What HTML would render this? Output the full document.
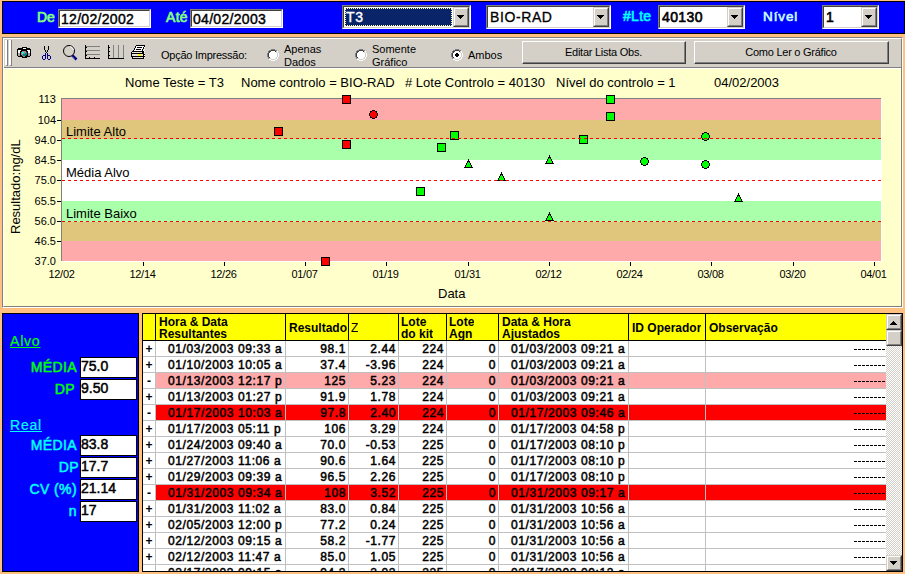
<!DOCTYPE html><html><head><meta charset="utf-8"><style>
*{margin:0;padding:0;box-sizing:border-box}
html,body{width:905px;height:574px;overflow:hidden;background:#FFC080;font-family:"Liberation Sans", sans-serif;}
.a{position:absolute}
.t{position:absolute;white-space:nowrap;line-height:1}
.sunk{position:absolute;border-top:1px solid #808080;border-left:1px solid #808080;border-right:1px solid #fff;border-bottom:1px solid #fff}
.sunk>.in{position:absolute;left:0;top:0;right:0;bottom:0;border-top:1px solid #404040;border-left:1px solid #404040;border-right:1px solid #D4D0C8;border-bottom:1px solid #D4D0C8;background:#fff}
.ddb{position:absolute;background:#D4D0C8;border-top:1px solid #D4D0C8;border-left:1px solid #D4D0C8;border-right:1px solid #404040;border-bottom:1px solid #404040}
.ddb>div{position:absolute;left:0;top:0;right:0;bottom:0;border-top:1px solid #fff;border-left:1px solid #fff;border-right:1px solid #808080;border-bottom:1px solid #808080}
.arr{position:absolute;width:0;height:0;border-left:4px solid transparent;border-right:4px solid transparent;border-top:4px solid #000}
.btn{position:absolute;background:#D4D0C8;border-top:1px solid #fff;border-left:1px solid #fff;border-right:1px solid #404040;border-bottom:1px solid #404040}
.btn>div{position:absolute;left:0;top:0;right:0;bottom:0;border-right:1px solid #808080;border-bottom:1px solid #808080}
</style></head><body><div class="a" style="left:2px;top:1px;width:903px;height:33px;background:#0000FF;border:1px solid #000"></div>
<div class="t" style="left:37px;top:10px;font-size:14px;-webkit-text-stroke:0.7px #80FF80;color:#80FF80">De</div>
<div class="sunk" style="left:58px;top:9px;width:93px;height:19px"><div class="in"></div><div class="t" style="left:2px;top:2px;font-size:14px;font-weight:normal;-webkit-text-stroke:0.45px #000;letter-spacing:0.3px;color:#000">12/02/2002</div></div>
<div class="t" style="left:166px;top:10px;font-size:14px;-webkit-text-stroke:0.7px #80FF80;letter-spacing:0.3px;color:#80FF80">Até</div>
<div class="sunk" style="left:190px;top:9px;width:93px;height:19px"><div class="in"></div><div class="t" style="left:2px;top:2px;font-size:14px;font-weight:normal;-webkit-text-stroke:0.45px #000;letter-spacing:0.3px;color:#000">04/02/2003</div></div>
<div class="sunk" style="left:342px;top:5px;width:129px;height:24px"><div class="in"></div></div>
<div class="a" style="left:345px;top:8px;width:107px;height:18px;background:#0A246A;outline:1px dotted #FFFFAA;outline-offset:-1px"></div>
<div class="t" style="left:346px;top:10px;font-size:14px;letter-spacing:0.8px;font-weight:normal;color:#fff;-webkit-text-stroke:0.4px #fff">T3</div>
<div class="ddb" style="left:453px;top:7px;width:16px;height:20px"><div></div></div><svg class="a" style="left:457px;top:15px" width="7" height="4" shape-rendering="crispEdges"><rect x="0" y="0" width="7" height="1" fill="#000"/><rect x="1" y="1" width="5" height="1" fill="#000"/><rect x="2" y="2" width="3" height="1" fill="#000"/><rect x="3" y="3" width="1" height="1" fill="#000"/></svg>
<div class="sunk" style="left:486px;top:5px;width:125px;height:24px"><div class="in"></div></div>
<div class="t" style="left:490px;top:10px;font-size:14px;letter-spacing:0.6px;font-weight:normal;color:#000;-webkit-text-stroke:0.3px #000">BIO-RAD</div>
<div class="ddb" style="left:593px;top:7px;width:16px;height:20px"><div></div></div><svg class="a" style="left:597px;top:15px" width="7" height="4" shape-rendering="crispEdges"><rect x="0" y="0" width="7" height="1" fill="#000"/><rect x="1" y="1" width="5" height="1" fill="#000"/><rect x="2" y="2" width="3" height="1" fill="#000"/><rect x="3" y="3" width="1" height="1" fill="#000"/></svg>
<div class="t" style="left:623px;top:9px;font-size:14px;-webkit-text-stroke:0.6px #00FFFF;letter-spacing:0.3px;color:#00FFFF">#Lte</div>
<div class="sunk" style="left:658px;top:5px;width:87px;height:24px"><div class="in"></div></div>
<div class="t" style="left:662px;top:10px;font-size:14px;letter-spacing:0.4px;font-weight:normal;color:#000;-webkit-text-stroke:0.6px #000">40130</div>
<div class="ddb" style="left:727px;top:7px;width:16px;height:20px"><div></div></div><svg class="a" style="left:731px;top:15px" width="7" height="4" shape-rendering="crispEdges"><rect x="0" y="0" width="7" height="1" fill="#000"/><rect x="1" y="1" width="5" height="1" fill="#000"/><rect x="2" y="2" width="3" height="1" fill="#000"/><rect x="3" y="3" width="1" height="1" fill="#000"/></svg>
<div class="t" style="left:763px;top:10px;font-size:13.5px;letter-spacing:0.9px;-webkit-text-stroke:0.6px #C8FFFF;color:#C8FFFF">Nível</div>
<div class="sunk" style="left:822px;top:5px;width:57px;height:24px"><div class="in"></div></div>
<div class="t" style="left:826px;top:10px;font-size:14px;letter-spacing:0px;font-weight:normal;color:#000;-webkit-text-stroke:0.6px #000">1</div>
<div class="ddb" style="left:861px;top:7px;width:16px;height:20px"><div></div></div><svg class="a" style="left:865px;top:15px" width="7" height="4" shape-rendering="crispEdges"><rect x="0" y="0" width="7" height="1" fill="#000"/><rect x="1" y="1" width="5" height="1" fill="#000"/><rect x="2" y="2" width="3" height="1" fill="#000"/><rect x="3" y="3" width="1" height="1" fill="#000"/></svg>
<div class="a" style="left:2px;top:37px;width:901px;height:271px;border-top:1px solid #808080;border-left:1px solid #808080;border-right:1px solid #fff;border-bottom:1px solid #fff"></div>
<div class="a" style="left:3px;top:38px;width:899px;height:269px;border-top:1px solid #fff;border-left:1px solid #fff;border-right:1px solid #808080;border-bottom:1px solid #808080;background:#FFFFCC"></div>
<div class="a" style="left:4px;top:39px;width:897px;height:29px;background:#D4D0C8;border-bottom:1px solid #808080"></div>
<div class="a" style="left:4px;top:68px;width:897px;height:1px;background:#fff"></div>
<div class="a" style="left:5px;top:40px;width:3px;height:26px;border-left:2px solid #fff;border-right:1px solid #808080;border-bottom:1px solid #808080"></div>
<div class="a" style="left:9px;top:40px;width:3px;height:26px;border-left:2px solid #fff;border-right:1px solid #808080;border-bottom:1px solid #808080"></div>
<div class="t" style="left:161px;top:50px;font-size:11px;letter-spacing:-0.25px;color:#000">Opção Impressão:</div>
<svg class="a" style="left:267px;top:49px" width="12" height="12" shape-rendering="crispEdges"><rect x="4" y="2" width="4" height="1" fill="#fff"/><rect x="3" y="3" width="6" height="1" fill="#fff"/><rect x="2" y="4" width="8" height="1" fill="#fff"/><rect x="2" y="5" width="8" height="1" fill="#fff"/><rect x="2" y="6" width="8" height="1" fill="#fff"/><rect x="2" y="7" width="8" height="1" fill="#fff"/><rect x="3" y="8" width="6" height="1" fill="#fff"/><rect x="4" y="9" width="4" height="1" fill="#fff"/><rect x="4" y="0" width="1" height="1" fill="#808080"/><rect x="5" y="0" width="1" height="1" fill="#808080"/><rect x="6" y="0" width="1" height="1" fill="#808080"/><rect x="7" y="0" width="1" height="1" fill="#808080"/><rect x="2" y="1" width="1" height="1" fill="#808080"/><rect x="3" y="1" width="1" height="1" fill="#808080"/><rect x="8" y="1" width="1" height="1" fill="#808080"/><rect x="9" y="1" width="1" height="1" fill="#808080"/><rect x="1" y="2" width="1" height="1" fill="#808080"/><rect x="10" y="2" width="1" height="1" fill="#FFFFFF"/><rect x="1" y="3" width="1" height="1" fill="#808080"/><rect x="10" y="3" width="1" height="1" fill="#FFFFFF"/><rect x="0" y="4" width="1" height="1" fill="#808080"/><rect x="11" y="4" width="1" height="1" fill="#FFFFFF"/><rect x="0" y="5" width="1" height="1" fill="#808080"/><rect x="11" y="5" width="1" height="1" fill="#FFFFFF"/><rect x="0" y="6" width="1" height="1" fill="#808080"/><rect x="11" y="6" width="1" height="1" fill="#FFFFFF"/><rect x="0" y="7" width="1" height="1" fill="#808080"/><rect x="11" y="7" width="1" height="1" fill="#FFFFFF"/><rect x="1" y="8" width="1" height="1" fill="#808080"/><rect x="10" y="8" width="1" height="1" fill="#FFFFFF"/><rect x="1" y="9" width="1" height="1" fill="#808080"/><rect x="10" y="9" width="1" height="1" fill="#FFFFFF"/><rect x="2" y="10" width="1" height="1" fill="#FFFFFF"/><rect x="3" y="10" width="1" height="1" fill="#FFFFFF"/><rect x="8" y="10" width="1" height="1" fill="#FFFFFF"/><rect x="9" y="10" width="1" height="1" fill="#FFFFFF"/><rect x="4" y="11" width="1" height="1" fill="#FFFFFF"/><rect x="5" y="11" width="1" height="1" fill="#FFFFFF"/><rect x="6" y="11" width="1" height="1" fill="#FFFFFF"/><rect x="7" y="11" width="1" height="1" fill="#FFFFFF"/><rect x="4" y="1" width="1" height="1" fill="#404040"/><rect x="5" y="1" width="1" height="1" fill="#404040"/><rect x="6" y="1" width="1" height="1" fill="#404040"/><rect x="7" y="1" width="1" height="1" fill="#404040"/><rect x="2" y="2" width="1" height="1" fill="#404040"/><rect x="3" y="2" width="1" height="1" fill="#404040"/><rect x="8" y="2" width="1" height="1" fill="#404040"/><rect x="9" y="2" width="1" height="1" fill="#D4D0C8"/><rect x="2" y="3" width="1" height="1" fill="#404040"/><rect x="9" y="3" width="1" height="1" fill="#D4D0C8"/><rect x="1" y="4" width="1" height="1" fill="#404040"/><rect x="10" y="4" width="1" height="1" fill="#D4D0C8"/><rect x="1" y="5" width="1" height="1" fill="#404040"/><rect x="10" y="5" width="1" height="1" fill="#D4D0C8"/><rect x="1" y="6" width="1" height="1" fill="#404040"/><rect x="10" y="6" width="1" height="1" fill="#D4D0C8"/><rect x="1" y="7" width="1" height="1" fill="#404040"/><rect x="10" y="7" width="1" height="1" fill="#D4D0C8"/><rect x="2" y="8" width="1" height="1" fill="#404040"/><rect x="9" y="8" width="1" height="1" fill="#D4D0C8"/><rect x="2" y="9" width="1" height="1" fill="#D4D0C8"/><rect x="3" y="9" width="1" height="1" fill="#D4D0C8"/><rect x="8" y="9" width="1" height="1" fill="#D4D0C8"/><rect x="9" y="9" width="1" height="1" fill="#D4D0C8"/><rect x="4" y="10" width="1" height="1" fill="#D4D0C8"/><rect x="5" y="10" width="1" height="1" fill="#D4D0C8"/><rect x="6" y="10" width="1" height="1" fill="#D4D0C8"/><rect x="7" y="10" width="1" height="1" fill="#D4D0C8"/></svg>
<div class="t" style="left:284px;top:43px;font-size:11px;line-height:13px;color:#000">Apenas<br>Dados</div>
<svg class="a" style="left:355px;top:49px" width="12" height="12" shape-rendering="crispEdges"><rect x="4" y="2" width="4" height="1" fill="#fff"/><rect x="3" y="3" width="6" height="1" fill="#fff"/><rect x="2" y="4" width="8" height="1" fill="#fff"/><rect x="2" y="5" width="8" height="1" fill="#fff"/><rect x="2" y="6" width="8" height="1" fill="#fff"/><rect x="2" y="7" width="8" height="1" fill="#fff"/><rect x="3" y="8" width="6" height="1" fill="#fff"/><rect x="4" y="9" width="4" height="1" fill="#fff"/><rect x="4" y="0" width="1" height="1" fill="#808080"/><rect x="5" y="0" width="1" height="1" fill="#808080"/><rect x="6" y="0" width="1" height="1" fill="#808080"/><rect x="7" y="0" width="1" height="1" fill="#808080"/><rect x="2" y="1" width="1" height="1" fill="#808080"/><rect x="3" y="1" width="1" height="1" fill="#808080"/><rect x="8" y="1" width="1" height="1" fill="#808080"/><rect x="9" y="1" width="1" height="1" fill="#808080"/><rect x="1" y="2" width="1" height="1" fill="#808080"/><rect x="10" y="2" width="1" height="1" fill="#FFFFFF"/><rect x="1" y="3" width="1" height="1" fill="#808080"/><rect x="10" y="3" width="1" height="1" fill="#FFFFFF"/><rect x="0" y="4" width="1" height="1" fill="#808080"/><rect x="11" y="4" width="1" height="1" fill="#FFFFFF"/><rect x="0" y="5" width="1" height="1" fill="#808080"/><rect x="11" y="5" width="1" height="1" fill="#FFFFFF"/><rect x="0" y="6" width="1" height="1" fill="#808080"/><rect x="11" y="6" width="1" height="1" fill="#FFFFFF"/><rect x="0" y="7" width="1" height="1" fill="#808080"/><rect x="11" y="7" width="1" height="1" fill="#FFFFFF"/><rect x="1" y="8" width="1" height="1" fill="#808080"/><rect x="10" y="8" width="1" height="1" fill="#FFFFFF"/><rect x="1" y="9" width="1" height="1" fill="#808080"/><rect x="10" y="9" width="1" height="1" fill="#FFFFFF"/><rect x="2" y="10" width="1" height="1" fill="#FFFFFF"/><rect x="3" y="10" width="1" height="1" fill="#FFFFFF"/><rect x="8" y="10" width="1" height="1" fill="#FFFFFF"/><rect x="9" y="10" width="1" height="1" fill="#FFFFFF"/><rect x="4" y="11" width="1" height="1" fill="#FFFFFF"/><rect x="5" y="11" width="1" height="1" fill="#FFFFFF"/><rect x="6" y="11" width="1" height="1" fill="#FFFFFF"/><rect x="7" y="11" width="1" height="1" fill="#FFFFFF"/><rect x="4" y="1" width="1" height="1" fill="#404040"/><rect x="5" y="1" width="1" height="1" fill="#404040"/><rect x="6" y="1" width="1" height="1" fill="#404040"/><rect x="7" y="1" width="1" height="1" fill="#404040"/><rect x="2" y="2" width="1" height="1" fill="#404040"/><rect x="3" y="2" width="1" height="1" fill="#404040"/><rect x="8" y="2" width="1" height="1" fill="#404040"/><rect x="9" y="2" width="1" height="1" fill="#D4D0C8"/><rect x="2" y="3" width="1" height="1" fill="#404040"/><rect x="9" y="3" width="1" height="1" fill="#D4D0C8"/><rect x="1" y="4" width="1" height="1" fill="#404040"/><rect x="10" y="4" width="1" height="1" fill="#D4D0C8"/><rect x="1" y="5" width="1" height="1" fill="#404040"/><rect x="10" y="5" width="1" height="1" fill="#D4D0C8"/><rect x="1" y="6" width="1" height="1" fill="#404040"/><rect x="10" y="6" width="1" height="1" fill="#D4D0C8"/><rect x="1" y="7" width="1" height="1" fill="#404040"/><rect x="10" y="7" width="1" height="1" fill="#D4D0C8"/><rect x="2" y="8" width="1" height="1" fill="#404040"/><rect x="9" y="8" width="1" height="1" fill="#D4D0C8"/><rect x="2" y="9" width="1" height="1" fill="#D4D0C8"/><rect x="3" y="9" width="1" height="1" fill="#D4D0C8"/><rect x="8" y="9" width="1" height="1" fill="#D4D0C8"/><rect x="9" y="9" width="1" height="1" fill="#D4D0C8"/><rect x="4" y="10" width="1" height="1" fill="#D4D0C8"/><rect x="5" y="10" width="1" height="1" fill="#D4D0C8"/><rect x="6" y="10" width="1" height="1" fill="#D4D0C8"/><rect x="7" y="10" width="1" height="1" fill="#D4D0C8"/></svg>
<div class="t" style="left:372px;top:43px;font-size:11px;line-height:13px;color:#000">Somente<br>Gráfico</div>
<svg class="a" style="left:451px;top:49px" width="12" height="12" shape-rendering="crispEdges"><rect x="4" y="2" width="4" height="1" fill="#fff"/><rect x="3" y="3" width="6" height="1" fill="#fff"/><rect x="2" y="4" width="8" height="1" fill="#fff"/><rect x="2" y="5" width="8" height="1" fill="#fff"/><rect x="2" y="6" width="8" height="1" fill="#fff"/><rect x="2" y="7" width="8" height="1" fill="#fff"/><rect x="3" y="8" width="6" height="1" fill="#fff"/><rect x="4" y="9" width="4" height="1" fill="#fff"/><rect x="4" y="0" width="1" height="1" fill="#808080"/><rect x="5" y="0" width="1" height="1" fill="#808080"/><rect x="6" y="0" width="1" height="1" fill="#808080"/><rect x="7" y="0" width="1" height="1" fill="#808080"/><rect x="2" y="1" width="1" height="1" fill="#808080"/><rect x="3" y="1" width="1" height="1" fill="#808080"/><rect x="8" y="1" width="1" height="1" fill="#808080"/><rect x="9" y="1" width="1" height="1" fill="#808080"/><rect x="1" y="2" width="1" height="1" fill="#808080"/><rect x="10" y="2" width="1" height="1" fill="#FFFFFF"/><rect x="1" y="3" width="1" height="1" fill="#808080"/><rect x="10" y="3" width="1" height="1" fill="#FFFFFF"/><rect x="0" y="4" width="1" height="1" fill="#808080"/><rect x="11" y="4" width="1" height="1" fill="#FFFFFF"/><rect x="0" y="5" width="1" height="1" fill="#808080"/><rect x="11" y="5" width="1" height="1" fill="#FFFFFF"/><rect x="0" y="6" width="1" height="1" fill="#808080"/><rect x="11" y="6" width="1" height="1" fill="#FFFFFF"/><rect x="0" y="7" width="1" height="1" fill="#808080"/><rect x="11" y="7" width="1" height="1" fill="#FFFFFF"/><rect x="1" y="8" width="1" height="1" fill="#808080"/><rect x="10" y="8" width="1" height="1" fill="#FFFFFF"/><rect x="1" y="9" width="1" height="1" fill="#808080"/><rect x="10" y="9" width="1" height="1" fill="#FFFFFF"/><rect x="2" y="10" width="1" height="1" fill="#FFFFFF"/><rect x="3" y="10" width="1" height="1" fill="#FFFFFF"/><rect x="8" y="10" width="1" height="1" fill="#FFFFFF"/><rect x="9" y="10" width="1" height="1" fill="#FFFFFF"/><rect x="4" y="11" width="1" height="1" fill="#FFFFFF"/><rect x="5" y="11" width="1" height="1" fill="#FFFFFF"/><rect x="6" y="11" width="1" height="1" fill="#FFFFFF"/><rect x="7" y="11" width="1" height="1" fill="#FFFFFF"/><rect x="4" y="1" width="1" height="1" fill="#404040"/><rect x="5" y="1" width="1" height="1" fill="#404040"/><rect x="6" y="1" width="1" height="1" fill="#404040"/><rect x="7" y="1" width="1" height="1" fill="#404040"/><rect x="2" y="2" width="1" height="1" fill="#404040"/><rect x="3" y="2" width="1" height="1" fill="#404040"/><rect x="8" y="2" width="1" height="1" fill="#404040"/><rect x="9" y="2" width="1" height="1" fill="#D4D0C8"/><rect x="2" y="3" width="1" height="1" fill="#404040"/><rect x="9" y="3" width="1" height="1" fill="#D4D0C8"/><rect x="1" y="4" width="1" height="1" fill="#404040"/><rect x="10" y="4" width="1" height="1" fill="#D4D0C8"/><rect x="1" y="5" width="1" height="1" fill="#404040"/><rect x="10" y="5" width="1" height="1" fill="#D4D0C8"/><rect x="1" y="6" width="1" height="1" fill="#404040"/><rect x="10" y="6" width="1" height="1" fill="#D4D0C8"/><rect x="1" y="7" width="1" height="1" fill="#404040"/><rect x="10" y="7" width="1" height="1" fill="#D4D0C8"/><rect x="2" y="8" width="1" height="1" fill="#404040"/><rect x="9" y="8" width="1" height="1" fill="#D4D0C8"/><rect x="2" y="9" width="1" height="1" fill="#D4D0C8"/><rect x="3" y="9" width="1" height="1" fill="#D4D0C8"/><rect x="8" y="9" width="1" height="1" fill="#D4D0C8"/><rect x="9" y="9" width="1" height="1" fill="#D4D0C8"/><rect x="4" y="10" width="1" height="1" fill="#D4D0C8"/><rect x="5" y="10" width="1" height="1" fill="#D4D0C8"/><rect x="6" y="10" width="1" height="1" fill="#D4D0C8"/><rect x="7" y="10" width="1" height="1" fill="#D4D0C8"/><rect x="5" y="4" width="2" height="1" fill="#000"/><rect x="4" y="5" width="4" height="1" fill="#000"/><rect x="4" y="6" width="4" height="1" fill="#000"/><rect x="5" y="7" width="2" height="1" fill="#000"/></svg>
<div class="t" style="left:468px;top:50px;font-size:11px;color:#000">Ambos</div>
<div class="btn" style="left:522px;top:41px;width:164px;height:23px"><div></div><div class="t" style="left:0;width:162px;text-align:center;top:5px;font-size:11px;letter-spacing:-0.25px;color:#000">Editar Lista Obs.</div></div>
<div class="btn" style="left:694px;top:41px;width:195px;height:23px"><div></div><div class="t" style="left:0;width:193px;text-align:center;top:5px;font-size:11px;letter-spacing:-0.25px;color:#000">Como Ler o Gráfico</div></div>
<svg class="a" style="left:0;top:0" width="905" height="574" shape-rendering="crispEdges"><defs><pattern id="dash" x="62" y="0" width="6" height="1" patternUnits="userSpaceOnUse"><rect x="0" y="0" width="3" height="1" fill="#FF0000"/></pattern></defs><rect x="62" y="99" width="819" height="21" fill="#FFAAAA"/><rect x="62" y="120" width="819" height="19" fill="#DFC67C"/><rect x="62" y="139" width="819" height="21" fill="#AAFFAA"/><rect x="62" y="160" width="819" height="41" fill="#FFFFFF"/><rect x="62" y="201" width="819" height="21" fill="#AAFFAA"/><rect x="62" y="222" width="819" height="19" fill="#DFC67C"/><rect x="62" y="241" width="819" height="20" fill="#FFAAAA"/><rect x="61" y="98" width="820" height="1" fill="#808080"/><rect x="61" y="98" width="1" height="163" fill="#808080"/><rect x="881" y="99" width="1" height="163" fill="#FFFFFF"/><rect x="61" y="261" width="821" height="1" fill="#FFFFFF"/><rect x="274" y="127" width="9" height="9" fill="#000"/><rect x="275" y="128" width="7" height="7" fill="#FF0000"/><rect x="321" y="257" width="9" height="9" fill="#000"/><rect x="322" y="258" width="7" height="7" fill="#FF0000"/><rect x="342" y="95" width="9" height="9" fill="#000"/><rect x="343" y="96" width="7" height="7" fill="#FF0000"/><rect x="342" y="140" width="9" height="9" fill="#000"/><rect x="343" y="141" width="7" height="7" fill="#FF0000"/><rect x="372" y="110" width="3" height="1" fill="#000"/><rect x="370" y="111" width="2" height="1" fill="#000"/><rect x="372" y="111" width="3" height="1" fill="#FF0000"/><rect x="375" y="111" width="2" height="1" fill="#000"/><rect x="370" y="112" width="1" height="1" fill="#000"/><rect x="371" y="112" width="5" height="1" fill="#FF0000"/><rect x="376" y="112" width="1" height="1" fill="#000"/><rect x="369" y="113" width="1" height="1" fill="#000"/><rect x="370" y="113" width="7" height="1" fill="#FF0000"/><rect x="377" y="113" width="1" height="1" fill="#000"/><rect x="369" y="114" width="1" height="1" fill="#000"/><rect x="370" y="114" width="7" height="1" fill="#FF0000"/><rect x="377" y="114" width="1" height="1" fill="#000"/><rect x="369" y="115" width="1" height="1" fill="#000"/><rect x="370" y="115" width="7" height="1" fill="#FF0000"/><rect x="377" y="115" width="1" height="1" fill="#000"/><rect x="370" y="116" width="1" height="1" fill="#000"/><rect x="371" y="116" width="5" height="1" fill="#FF0000"/><rect x="376" y="116" width="1" height="1" fill="#000"/><rect x="370" y="117" width="2" height="1" fill="#000"/><rect x="372" y="117" width="3" height="1" fill="#FF0000"/><rect x="375" y="117" width="2" height="1" fill="#000"/><rect x="372" y="118" width="3" height="1" fill="#000"/><rect x="416" y="187" width="9" height="9" fill="#000"/><rect x="417" y="188" width="7" height="7" fill="#00FF00"/><rect x="437" y="143" width="9" height="9" fill="#000"/><rect x="438" y="144" width="7" height="7" fill="#00FF00"/><rect x="450" y="131" width="9" height="9" fill="#000"/><rect x="451" y="132" width="7" height="7" fill="#00FF00"/><path d="M468.5 159 L473 168 L464 168 Z" fill="#000"/><path d="M468.5 161.5 L471.3 167 L465.7 167 Z" fill="#00FF00"/><path d="M501.5 172 L506 181 L497 181 Z" fill="#000"/><path d="M501.5 174.5 L504.3 180 L498.7 180 Z" fill="#00FF00"/><path d="M549.5 155 L554 164 L545 164 Z" fill="#000"/><path d="M549.5 157.5 L552.3 163 L546.7 163 Z" fill="#00FF00"/><path d="M549.5 212 L554 221 L545 221 Z" fill="#000"/><path d="M549.5 214.5 L552.3 220 L546.7 220 Z" fill="#00FF00"/><rect x="579" y="135" width="9" height="9" fill="#000"/><rect x="580" y="136" width="7" height="7" fill="#00FF00"/><rect x="606" y="95" width="9" height="9" fill="#000"/><rect x="607" y="96" width="7" height="7" fill="#00FF00"/><rect x="606" y="112" width="9" height="9" fill="#000"/><rect x="607" y="113" width="7" height="7" fill="#00FF00"/><rect x="643" y="157" width="3" height="1" fill="#000"/><rect x="641" y="158" width="2" height="1" fill="#000"/><rect x="643" y="158" width="3" height="1" fill="#00FF00"/><rect x="646" y="158" width="2" height="1" fill="#000"/><rect x="641" y="159" width="1" height="1" fill="#000"/><rect x="642" y="159" width="5" height="1" fill="#00FF00"/><rect x="647" y="159" width="1" height="1" fill="#000"/><rect x="640" y="160" width="1" height="1" fill="#000"/><rect x="641" y="160" width="7" height="1" fill="#00FF00"/><rect x="648" y="160" width="1" height="1" fill="#000"/><rect x="640" y="161" width="1" height="1" fill="#000"/><rect x="641" y="161" width="7" height="1" fill="#00FF00"/><rect x="648" y="161" width="1" height="1" fill="#000"/><rect x="640" y="162" width="1" height="1" fill="#000"/><rect x="641" y="162" width="7" height="1" fill="#00FF00"/><rect x="648" y="162" width="1" height="1" fill="#000"/><rect x="641" y="163" width="1" height="1" fill="#000"/><rect x="642" y="163" width="5" height="1" fill="#00FF00"/><rect x="647" y="163" width="1" height="1" fill="#000"/><rect x="641" y="164" width="2" height="1" fill="#000"/><rect x="643" y="164" width="3" height="1" fill="#00FF00"/><rect x="646" y="164" width="2" height="1" fill="#000"/><rect x="643" y="165" width="3" height="1" fill="#000"/><rect x="704" y="132" width="3" height="1" fill="#000"/><rect x="702" y="133" width="2" height="1" fill="#000"/><rect x="704" y="133" width="3" height="1" fill="#00FF00"/><rect x="707" y="133" width="2" height="1" fill="#000"/><rect x="702" y="134" width="1" height="1" fill="#000"/><rect x="703" y="134" width="5" height="1" fill="#00FF00"/><rect x="708" y="134" width="1" height="1" fill="#000"/><rect x="701" y="135" width="1" height="1" fill="#000"/><rect x="702" y="135" width="7" height="1" fill="#00FF00"/><rect x="709" y="135" width="1" height="1" fill="#000"/><rect x="701" y="136" width="1" height="1" fill="#000"/><rect x="702" y="136" width="7" height="1" fill="#00FF00"/><rect x="709" y="136" width="1" height="1" fill="#000"/><rect x="701" y="137" width="1" height="1" fill="#000"/><rect x="702" y="137" width="7" height="1" fill="#00FF00"/><rect x="709" y="137" width="1" height="1" fill="#000"/><rect x="702" y="138" width="1" height="1" fill="#000"/><rect x="703" y="138" width="5" height="1" fill="#00FF00"/><rect x="708" y="138" width="1" height="1" fill="#000"/><rect x="702" y="139" width="2" height="1" fill="#000"/><rect x="704" y="139" width="3" height="1" fill="#00FF00"/><rect x="707" y="139" width="2" height="1" fill="#000"/><rect x="704" y="140" width="3" height="1" fill="#000"/><rect x="704" y="160" width="3" height="1" fill="#000"/><rect x="702" y="161" width="2" height="1" fill="#000"/><rect x="704" y="161" width="3" height="1" fill="#00FF00"/><rect x="707" y="161" width="2" height="1" fill="#000"/><rect x="702" y="162" width="1" height="1" fill="#000"/><rect x="703" y="162" width="5" height="1" fill="#00FF00"/><rect x="708" y="162" width="1" height="1" fill="#000"/><rect x="701" y="163" width="1" height="1" fill="#000"/><rect x="702" y="163" width="7" height="1" fill="#00FF00"/><rect x="709" y="163" width="1" height="1" fill="#000"/><rect x="701" y="164" width="1" height="1" fill="#000"/><rect x="702" y="164" width="7" height="1" fill="#00FF00"/><rect x="709" y="164" width="1" height="1" fill="#000"/><rect x="701" y="165" width="1" height="1" fill="#000"/><rect x="702" y="165" width="7" height="1" fill="#00FF00"/><rect x="709" y="165" width="1" height="1" fill="#000"/><rect x="702" y="166" width="1" height="1" fill="#000"/><rect x="703" y="166" width="5" height="1" fill="#00FF00"/><rect x="708" y="166" width="1" height="1" fill="#000"/><rect x="702" y="167" width="2" height="1" fill="#000"/><rect x="704" y="167" width="3" height="1" fill="#00FF00"/><rect x="707" y="167" width="2" height="1" fill="#000"/><rect x="704" y="168" width="3" height="1" fill="#000"/><path d="M738.5 193 L743 202 L734 202 Z" fill="#000"/><path d="M738.5 195.5 L741.3 201 L735.7 201 Z" fill="#00FF00"/><rect x="62" y="138" width="819" height="1" fill="url(#dash)"/><rect x="62" y="180" width="819" height="1" fill="url(#dash)"/><rect x="62" y="221" width="819" height="1" fill="url(#dash)"/><rect x="57" y="120" width="4" height="1" fill="#000"/><rect x="57" y="140" width="4" height="1" fill="#000"/><rect x="57" y="160" width="4" height="1" fill="#000"/><rect x="57" y="180" width="4" height="1" fill="#000"/><rect x="57" y="201" width="4" height="1" fill="#000"/><rect x="57" y="221" width="4" height="1" fill="#000"/><rect x="57" y="241" width="4" height="1" fill="#000"/><rect x="143" y="262" width="1" height="4" fill="#000"/><rect x="224" y="262" width="1" height="4" fill="#000"/><rect x="305" y="262" width="1" height="4" fill="#000"/><rect x="386" y="262" width="1" height="4" fill="#000"/><rect x="468" y="262" width="1" height="4" fill="#000"/><rect x="549" y="262" width="1" height="4" fill="#000"/><rect x="630" y="262" width="1" height="4" fill="#000"/><rect x="711" y="262" width="1" height="4" fill="#000"/><rect x="793" y="262" width="1" height="4" fill="#000"/><rect x="874" y="262" width="1" height="4" fill="#000"/></svg>
<div class="t" style="left:0;width:56px;text-align:right;top:94px;font-size:11px;color:#000">113</div>
<div class="t" style="left:0;width:56px;text-align:right;top:115px;font-size:11px;color:#000">104</div>
<div class="t" style="left:0;width:56px;text-align:right;top:135px;font-size:11px;color:#000">94.0</div>
<div class="t" style="left:0;width:56px;text-align:right;top:155px;font-size:11px;color:#000">84.5</div>
<div class="t" style="left:0;width:56px;text-align:right;top:175px;font-size:11px;color:#000">75.0</div>
<div class="t" style="left:0;width:56px;text-align:right;top:196px;font-size:11px;color:#000">65.5</div>
<div class="t" style="left:0;width:56px;text-align:right;top:216px;font-size:11px;color:#000">56.0</div>
<div class="t" style="left:0;width:56px;text-align:right;top:236px;font-size:11px;color:#000">46.5</div>
<div class="t" style="left:0;width:56px;text-align:right;top:256px;font-size:11px;color:#000">37.0</div>
<div class="t" style="left:41px;width:41px;text-align:center;top:269px;font-size:11px;letter-spacing:-0.3px;color:#000">12/02</div>
<div class="t" style="left:122px;width:41px;text-align:center;top:269px;font-size:11px;letter-spacing:-0.3px;color:#000">12/14</div>
<div class="t" style="left:203px;width:41px;text-align:center;top:269px;font-size:11px;letter-spacing:-0.3px;color:#000">12/26</div>
<div class="t" style="left:284px;width:41px;text-align:center;top:269px;font-size:11px;letter-spacing:-0.3px;color:#000">01/07</div>
<div class="t" style="left:365px;width:41px;text-align:center;top:269px;font-size:11px;letter-spacing:-0.3px;color:#000">01/19</div>
<div class="t" style="left:447px;width:41px;text-align:center;top:269px;font-size:11px;letter-spacing:-0.3px;color:#000">01/31</div>
<div class="t" style="left:528px;width:41px;text-align:center;top:269px;font-size:11px;letter-spacing:-0.3px;color:#000">02/12</div>
<div class="t" style="left:609px;width:41px;text-align:center;top:269px;font-size:11px;letter-spacing:-0.3px;color:#000">02/24</div>
<div class="t" style="left:690px;width:41px;text-align:center;top:269px;font-size:11px;letter-spacing:-0.3px;color:#000">03/08</div>
<div class="t" style="left:772px;width:41px;text-align:center;top:269px;font-size:11px;letter-spacing:-0.3px;color:#000">03/20</div>
<div class="t" style="left:853px;width:41px;text-align:center;top:269px;font-size:11px;letter-spacing:-0.3px;color:#000">04/01</div>
<div class="t" style="left:438px;top:287px;font-size:13px;color:#000">Data</div>
<div class="t" style="left:9px;top:234px;font-size:13px;color:#000;transform-origin:0 0;transform:rotate(-90deg)">Resultado:ng/dL</div>
<div class="t" style="left:125px;top:76px;font-size:13px;color:#000">Nome Teste = T3</div>
<div class="t" style="left:241px;top:76px;font-size:13px;color:#000">Nome controlo = BIO-RAD</div>
<div class="t" style="left:405px;top:76px;font-size:13px;color:#000"># Lote Controlo = 40130</div>
<div class="t" style="left:556px;top:76px;font-size:13px;color:#000">Nível do controlo = 1</div>
<div class="t" style="left:714px;top:76px;font-size:13px;color:#000">04/02/2003</div>
<div class="t" style="left:66px;top:125px;font-size:13px;color:#000">Limite Alto</div>
<div class="t" style="left:66px;top:166px;font-size:13px;color:#000">Média Alvo</div>
<div class="t" style="left:66px;top:207px;font-size:13px;color:#000">Limite Baixo</div>
<div class="a" style="left:2px;top:313px;width:137px;height:259px;background:#0000FF;border:1px solid #000"></div>
<div class="t" style="left:10px;top:334px;font-size:14px;letter-spacing:0.8px;-webkit-text-stroke:0.2px #00FF00;color:#00FF00;text-decoration:underline">Alvo</div>
<div class="t" style="left:10px;top:418px;font-size:14px;letter-spacing:0.8px;-webkit-text-stroke:0.2px #00FFFF;color:#00FFFF;text-decoration:underline">Real</div>
<div class="t" style="left:0;width:77px;text-align:right;top:360px;font-size:14px;-webkit-text-stroke:0.5px #00FF00;letter-spacing:0.4px;color:#00FF00">MÉDIA</div>
<div class="a" style="left:80px;top:357px;width:57px;height:21px;background:#fff;border:1px solid #000"></div>
<div class="t" style="left:81px;top:359px;font-size:14px;-webkit-text-stroke:0.5px #000;color:#000">75.0</div>
<div class="t" style="left:0;width:75px;text-align:right;top:382px;font-size:14px;-webkit-text-stroke:0.5px #00FF00;letter-spacing:0.4px;color:#00FF00">DP</div>
<div class="a" style="left:80px;top:379px;width:57px;height:21px;background:#fff;border:1px solid #000"></div>
<div class="t" style="left:81px;top:381px;font-size:14px;-webkit-text-stroke:0.5px #000;color:#000">9.50</div>
<div class="t" style="left:0;width:77px;text-align:right;top:438px;font-size:14px;-webkit-text-stroke:0.5px #00FFFF;letter-spacing:0.4px;color:#00FFFF">MÉDIA</div>
<div class="a" style="left:80px;top:435px;width:57px;height:21px;background:#fff;border:1px solid #000"></div>
<div class="t" style="left:81px;top:437px;font-size:14px;-webkit-text-stroke:0.5px #000;color:#000">83.8</div>
<div class="t" style="left:0;width:79px;text-align:right;top:460px;font-size:14px;-webkit-text-stroke:0.5px #00FFFF;letter-spacing:0.4px;color:#00FFFF">DP</div>
<div class="a" style="left:80px;top:457px;width:57px;height:21px;background:#fff;border:1px solid #000"></div>
<div class="t" style="left:81px;top:459px;font-size:14px;-webkit-text-stroke:0.5px #000;color:#000">17.7</div>
<div class="t" style="left:0;width:77px;text-align:right;top:482px;font-size:14px;-webkit-text-stroke:0.5px #00FFFF;letter-spacing:0.4px;color:#00FFFF">CV (%)</div>
<div class="a" style="left:80px;top:479px;width:57px;height:21px;background:#fff;border:1px solid #000"></div>
<div class="t" style="left:81px;top:481px;font-size:14px;-webkit-text-stroke:0.5px #000;color:#000">21.14</div>
<div class="t" style="left:0;width:77px;text-align:right;top:504px;font-size:14px;-webkit-text-stroke:0.5px #00FFFF;letter-spacing:0.4px;color:#00FFFF">n</div>
<div class="a" style="left:80px;top:501px;width:57px;height:21px;background:#fff;border:1px solid #000"></div>
<div class="t" style="left:81px;top:503px;font-size:14px;-webkit-text-stroke:0.5px #000;color:#000">17</div>
<div class="a" style="left:142px;top:313px;width:761px;height:259px;background:#fff;border:1px solid #000;overflow:hidden">
<div class="a" style="left:0;top:0;width:743px;height:27px;background:#FFFF00;border-bottom:1px solid #000"></div>
<div class="a" style="left:0;top:42px;width:743px;height:1px;background:#C0C0C0"></div>
<div class="a" style="left:0;top:58px;width:743px;height:1px;background:#C0C0C0"></div>
<div class="a" style="left:13px;top:59px;width:730px;height:15px;background:#FFAAAA"></div>
<div class="a" style="left:0;top:74px;width:743px;height:1px;background:#C0C0C0"></div>
<div class="a" style="left:0;top:90px;width:743px;height:1px;background:#C0C0C0"></div>
<div class="a" style="left:13px;top:91px;width:730px;height:15px;background:#FF0000"></div>
<div class="a" style="left:0;top:106px;width:743px;height:1px;background:#C0C0C0"></div>
<div class="a" style="left:0;top:122px;width:743px;height:1px;background:#C0C0C0"></div>
<div class="a" style="left:0;top:138px;width:743px;height:1px;background:#C0C0C0"></div>
<div class="a" style="left:0;top:154px;width:743px;height:1px;background:#C0C0C0"></div>
<div class="a" style="left:0;top:170px;width:743px;height:1px;background:#C0C0C0"></div>
<div class="a" style="left:13px;top:171px;width:730px;height:15px;background:#FF0000"></div>
<div class="a" style="left:0;top:186px;width:743px;height:1px;background:#C0C0C0"></div>
<div class="a" style="left:0;top:202px;width:743px;height:1px;background:#C0C0C0"></div>
<div class="a" style="left:0;top:218px;width:743px;height:1px;background:#C0C0C0"></div>
<div class="a" style="left:0;top:234px;width:743px;height:1px;background:#C0C0C0"></div>
<div class="a" style="left:0;top:250px;width:743px;height:1px;background:#C0C0C0"></div>
<div class="a" style="left:0;top:266px;width:743px;height:1px;background:#C0C0C0"></div>
<div class="a" style="left:12px;top:0;width:1px;height:27px;background:#000"></div>
<div class="a" style="left:12px;top:27px;width:1px;height:240px;background:#C0C0C0"></div>
<div class="a" style="left:142px;top:0;width:1px;height:27px;background:#000"></div>
<div class="a" style="left:142px;top:27px;width:1px;height:240px;background:#C0C0C0"></div>
<div class="a" style="left:205px;top:0;width:1px;height:27px;background:#000"></div>
<div class="a" style="left:205px;top:27px;width:1px;height:240px;background:#C0C0C0"></div>
<div class="a" style="left:255px;top:0;width:1px;height:27px;background:#000"></div>
<div class="a" style="left:255px;top:27px;width:1px;height:240px;background:#C0C0C0"></div>
<div class="a" style="left:303px;top:0;width:1px;height:27px;background:#000"></div>
<div class="a" style="left:303px;top:27px;width:1px;height:240px;background:#C0C0C0"></div>
<div class="a" style="left:355px;top:0;width:1px;height:27px;background:#000"></div>
<div class="a" style="left:355px;top:27px;width:1px;height:240px;background:#C0C0C0"></div>
<div class="a" style="left:485px;top:0;width:1px;height:27px;background:#000"></div>
<div class="a" style="left:485px;top:27px;width:1px;height:240px;background:#C0C0C0"></div>
<div class="a" style="left:562px;top:0;width:1px;height:27px;background:#000"></div>
<div class="a" style="left:562px;top:27px;width:1px;height:240px;background:#C0C0C0"></div>
<div class="t" style="left:16px;top:2px;font-size:12px;line-height:12px;font-weight:bold;color:#000;height:24px;overflow:hidden">Hora & Data<br>Resultantes</div>
<div class="t" style="left:146px;top:8px;font-size:12px;line-height:12px;font-weight:bold;color:#000;height:18px;overflow:hidden">Resultado</div>
<div class="t" style="left:208px;top:8px;font-size:12px;line-height:12px;font-weight:normal;color:#000;height:18px;overflow:hidden">Z</div>
<div class="t" style="left:258px;top:2px;font-size:12px;line-height:12px;font-weight:bold;color:#000;height:24px;overflow:hidden">Lote<br>do kit</div>
<div class="t" style="left:306px;top:2px;font-size:12px;line-height:12px;font-weight:bold;color:#000;height:24px;overflow:hidden">Lote<br>Agn</div>
<div class="t" style="left:359px;top:2px;font-size:12px;line-height:12px;font-weight:bold;color:#000;height:24px;overflow:hidden">Data & Hora<br>Ajustados</div>
<div class="t" style="left:489px;top:8px;font-size:12px;line-height:12px;font-weight:bold;color:#000;height:18px;overflow:hidden">ID Operador</div>
<div class="t" style="left:566px;top:8px;font-size:12px;line-height:12px;font-weight:bold;color:#000;height:18px;overflow:hidden">Observação</div>
<div class="t" style="left:1px;width:10px;text-align:center;top:29px;font-size:12px;font-weight:bold">+</div>
<div class="t" style="left:25px;top:29px;font-size:12px;-webkit-text-stroke:0.5px #000;letter-spacing:0.6px">01/03/2003 09:33 a</div>
<div class="t" style="left:142px;width:61px;text-align:right;top:29px;font-size:12px;-webkit-text-stroke:0.5px #000;letter-spacing:0.6px">98.1</div>
<div class="t" style="left:205px;width:48px;text-align:right;top:29px;font-size:12px;-webkit-text-stroke:0.5px #000;letter-spacing:0.6px">2.44</div>
<div class="t" style="left:255px;width:46px;text-align:right;top:29px;font-size:12px;-webkit-text-stroke:0.5px #000;letter-spacing:0.6px">224</div>
<div class="t" style="left:303px;width:50px;text-align:right;top:29px;font-size:12px;-webkit-text-stroke:0.5px #000;letter-spacing:0.6px">0</div>
<div class="t" style="left:368px;top:29px;font-size:12px;-webkit-text-stroke:0.5px #000;letter-spacing:0.6px">01/03/2003 09:21 a</div>
<div class="a" style="left:711px;top:35px;width:31px;height:1px;background:repeating-linear-gradient(90deg,#000 0 3px,transparent 3px 4px)"></div>
<div class="t" style="left:1px;width:10px;text-align:center;top:45px;font-size:12px;font-weight:bold">+</div>
<div class="t" style="left:25px;top:45px;font-size:12px;-webkit-text-stroke:0.5px #000;letter-spacing:0.6px">01/10/2003 10:05 a</div>
<div class="t" style="left:142px;width:61px;text-align:right;top:45px;font-size:12px;-webkit-text-stroke:0.5px #000;letter-spacing:0.6px">37.4</div>
<div class="t" style="left:205px;width:48px;text-align:right;top:45px;font-size:12px;-webkit-text-stroke:0.5px #000;letter-spacing:0.6px">-3.96</div>
<div class="t" style="left:255px;width:46px;text-align:right;top:45px;font-size:12px;-webkit-text-stroke:0.5px #000;letter-spacing:0.6px">224</div>
<div class="t" style="left:303px;width:50px;text-align:right;top:45px;font-size:12px;-webkit-text-stroke:0.5px #000;letter-spacing:0.6px">0</div>
<div class="t" style="left:368px;top:45px;font-size:12px;-webkit-text-stroke:0.5px #000;letter-spacing:0.6px">01/03/2003 09:21 a</div>
<div class="a" style="left:711px;top:51px;width:31px;height:1px;background:repeating-linear-gradient(90deg,#000 0 3px,transparent 3px 4px)"></div>
<div class="t" style="left:1px;width:10px;text-align:center;top:61px;font-size:12px;font-weight:bold">-</div>
<div class="t" style="left:25px;top:61px;font-size:12px;-webkit-text-stroke:0.5px #000;letter-spacing:0.6px">01/13/2003 12:17 p</div>
<div class="t" style="left:142px;width:61px;text-align:right;top:61px;font-size:12px;-webkit-text-stroke:0.5px #000;letter-spacing:0.6px">125</div>
<div class="t" style="left:205px;width:48px;text-align:right;top:61px;font-size:12px;-webkit-text-stroke:0.5px #000;letter-spacing:0.6px">5.23</div>
<div class="t" style="left:255px;width:46px;text-align:right;top:61px;font-size:12px;-webkit-text-stroke:0.5px #000;letter-spacing:0.6px">224</div>
<div class="t" style="left:303px;width:50px;text-align:right;top:61px;font-size:12px;-webkit-text-stroke:0.5px #000;letter-spacing:0.6px">0</div>
<div class="t" style="left:368px;top:61px;font-size:12px;-webkit-text-stroke:0.5px #000;letter-spacing:0.6px">01/03/2003 09:21 a</div>
<div class="a" style="left:711px;top:67px;width:31px;height:1px;background:repeating-linear-gradient(90deg,#000 0 3px,transparent 3px 4px)"></div>
<div class="t" style="left:1px;width:10px;text-align:center;top:77px;font-size:12px;font-weight:bold">+</div>
<div class="t" style="left:25px;top:77px;font-size:12px;-webkit-text-stroke:0.5px #000;letter-spacing:0.6px">01/13/2003 01:27 p</div>
<div class="t" style="left:142px;width:61px;text-align:right;top:77px;font-size:12px;-webkit-text-stroke:0.5px #000;letter-spacing:0.6px">91.9</div>
<div class="t" style="left:205px;width:48px;text-align:right;top:77px;font-size:12px;-webkit-text-stroke:0.5px #000;letter-spacing:0.6px">1.78</div>
<div class="t" style="left:255px;width:46px;text-align:right;top:77px;font-size:12px;-webkit-text-stroke:0.5px #000;letter-spacing:0.6px">224</div>
<div class="t" style="left:303px;width:50px;text-align:right;top:77px;font-size:12px;-webkit-text-stroke:0.5px #000;letter-spacing:0.6px">0</div>
<div class="t" style="left:368px;top:77px;font-size:12px;-webkit-text-stroke:0.5px #000;letter-spacing:0.6px">01/03/2003 09:21 a</div>
<div class="a" style="left:711px;top:83px;width:31px;height:1px;background:repeating-linear-gradient(90deg,#000 0 3px,transparent 3px 4px)"></div>
<div class="t" style="left:1px;width:10px;text-align:center;top:93px;font-size:12px;font-weight:bold">-</div>
<div class="t" style="left:25px;top:93px;font-size:12px;-webkit-text-stroke:0.5px #000;letter-spacing:0.6px">01/17/2003 10:03 a</div>
<div class="t" style="left:142px;width:61px;text-align:right;top:93px;font-size:12px;-webkit-text-stroke:0.5px #000;letter-spacing:0.6px">97.8</div>
<div class="t" style="left:205px;width:48px;text-align:right;top:93px;font-size:12px;-webkit-text-stroke:0.5px #000;letter-spacing:0.6px">2.40</div>
<div class="t" style="left:255px;width:46px;text-align:right;top:93px;font-size:12px;-webkit-text-stroke:0.5px #000;letter-spacing:0.6px">224</div>
<div class="t" style="left:303px;width:50px;text-align:right;top:93px;font-size:12px;-webkit-text-stroke:0.5px #000;letter-spacing:0.6px">0</div>
<div class="t" style="left:368px;top:93px;font-size:12px;-webkit-text-stroke:0.5px #000;letter-spacing:0.6px">01/17/2003 09:46 a</div>
<div class="a" style="left:711px;top:99px;width:31px;height:1px;background:repeating-linear-gradient(90deg,#000 0 3px,transparent 3px 4px)"></div>
<div class="t" style="left:1px;width:10px;text-align:center;top:109px;font-size:12px;font-weight:bold">+</div>
<div class="t" style="left:25px;top:109px;font-size:12px;-webkit-text-stroke:0.5px #000;letter-spacing:0.6px">01/17/2003 05:11 p</div>
<div class="t" style="left:142px;width:61px;text-align:right;top:109px;font-size:12px;-webkit-text-stroke:0.5px #000;letter-spacing:0.6px">106</div>
<div class="t" style="left:205px;width:48px;text-align:right;top:109px;font-size:12px;-webkit-text-stroke:0.5px #000;letter-spacing:0.6px">3.29</div>
<div class="t" style="left:255px;width:46px;text-align:right;top:109px;font-size:12px;-webkit-text-stroke:0.5px #000;letter-spacing:0.6px">224</div>
<div class="t" style="left:303px;width:50px;text-align:right;top:109px;font-size:12px;-webkit-text-stroke:0.5px #000;letter-spacing:0.6px">0</div>
<div class="t" style="left:368px;top:109px;font-size:12px;-webkit-text-stroke:0.5px #000;letter-spacing:0.6px">01/17/2003 04:58 p</div>
<div class="a" style="left:711px;top:115px;width:31px;height:1px;background:repeating-linear-gradient(90deg,#000 0 3px,transparent 3px 4px)"></div>
<div class="t" style="left:1px;width:10px;text-align:center;top:125px;font-size:12px;font-weight:bold">+</div>
<div class="t" style="left:25px;top:125px;font-size:12px;-webkit-text-stroke:0.5px #000;letter-spacing:0.6px">01/24/2003 09:40 a</div>
<div class="t" style="left:142px;width:61px;text-align:right;top:125px;font-size:12px;-webkit-text-stroke:0.5px #000;letter-spacing:0.6px">70.0</div>
<div class="t" style="left:205px;width:48px;text-align:right;top:125px;font-size:12px;-webkit-text-stroke:0.5px #000;letter-spacing:0.6px">-0.53</div>
<div class="t" style="left:255px;width:46px;text-align:right;top:125px;font-size:12px;-webkit-text-stroke:0.5px #000;letter-spacing:0.6px">225</div>
<div class="t" style="left:303px;width:50px;text-align:right;top:125px;font-size:12px;-webkit-text-stroke:0.5px #000;letter-spacing:0.6px">0</div>
<div class="t" style="left:368px;top:125px;font-size:12px;-webkit-text-stroke:0.5px #000;letter-spacing:0.6px">01/17/2003 08:10 p</div>
<div class="a" style="left:711px;top:131px;width:31px;height:1px;background:repeating-linear-gradient(90deg,#000 0 3px,transparent 3px 4px)"></div>
<div class="t" style="left:1px;width:10px;text-align:center;top:141px;font-size:12px;font-weight:bold">+</div>
<div class="t" style="left:25px;top:141px;font-size:12px;-webkit-text-stroke:0.5px #000;letter-spacing:0.6px">01/27/2003 11:06 a</div>
<div class="t" style="left:142px;width:61px;text-align:right;top:141px;font-size:12px;-webkit-text-stroke:0.5px #000;letter-spacing:0.6px">90.6</div>
<div class="t" style="left:205px;width:48px;text-align:right;top:141px;font-size:12px;-webkit-text-stroke:0.5px #000;letter-spacing:0.6px">1.64</div>
<div class="t" style="left:255px;width:46px;text-align:right;top:141px;font-size:12px;-webkit-text-stroke:0.5px #000;letter-spacing:0.6px">225</div>
<div class="t" style="left:303px;width:50px;text-align:right;top:141px;font-size:12px;-webkit-text-stroke:0.5px #000;letter-spacing:0.6px">0</div>
<div class="t" style="left:368px;top:141px;font-size:12px;-webkit-text-stroke:0.5px #000;letter-spacing:0.6px">01/17/2003 08:10 p</div>
<div class="a" style="left:711px;top:147px;width:31px;height:1px;background:repeating-linear-gradient(90deg,#000 0 3px,transparent 3px 4px)"></div>
<div class="t" style="left:1px;width:10px;text-align:center;top:157px;font-size:12px;font-weight:bold">+</div>
<div class="t" style="left:25px;top:157px;font-size:12px;-webkit-text-stroke:0.5px #000;letter-spacing:0.6px">01/29/2003 09:39 a</div>
<div class="t" style="left:142px;width:61px;text-align:right;top:157px;font-size:12px;-webkit-text-stroke:0.5px #000;letter-spacing:0.6px">96.5</div>
<div class="t" style="left:205px;width:48px;text-align:right;top:157px;font-size:12px;-webkit-text-stroke:0.5px #000;letter-spacing:0.6px">2.26</div>
<div class="t" style="left:255px;width:46px;text-align:right;top:157px;font-size:12px;-webkit-text-stroke:0.5px #000;letter-spacing:0.6px">225</div>
<div class="t" style="left:303px;width:50px;text-align:right;top:157px;font-size:12px;-webkit-text-stroke:0.5px #000;letter-spacing:0.6px">0</div>
<div class="t" style="left:368px;top:157px;font-size:12px;-webkit-text-stroke:0.5px #000;letter-spacing:0.6px">01/17/2003 08:10 p</div>
<div class="a" style="left:711px;top:163px;width:31px;height:1px;background:repeating-linear-gradient(90deg,#000 0 3px,transparent 3px 4px)"></div>
<div class="t" style="left:1px;width:10px;text-align:center;top:173px;font-size:12px;font-weight:bold">-</div>
<div class="t" style="left:25px;top:173px;font-size:12px;-webkit-text-stroke:0.5px #000;letter-spacing:0.6px">01/31/2003 09:34 a</div>
<div class="t" style="left:142px;width:61px;text-align:right;top:173px;font-size:12px;-webkit-text-stroke:0.5px #000;letter-spacing:0.6px">108</div>
<div class="t" style="left:205px;width:48px;text-align:right;top:173px;font-size:12px;-webkit-text-stroke:0.5px #000;letter-spacing:0.6px">3.52</div>
<div class="t" style="left:255px;width:46px;text-align:right;top:173px;font-size:12px;-webkit-text-stroke:0.5px #000;letter-spacing:0.6px">225</div>
<div class="t" style="left:303px;width:50px;text-align:right;top:173px;font-size:12px;-webkit-text-stroke:0.5px #000;letter-spacing:0.6px">0</div>
<div class="t" style="left:368px;top:173px;font-size:12px;-webkit-text-stroke:0.5px #000;letter-spacing:0.6px">01/31/2003 09:17 a</div>
<div class="a" style="left:711px;top:179px;width:31px;height:1px;background:repeating-linear-gradient(90deg,#000 0 3px,transparent 3px 4px)"></div>
<div class="t" style="left:1px;width:10px;text-align:center;top:189px;font-size:12px;font-weight:bold">+</div>
<div class="t" style="left:25px;top:189px;font-size:12px;-webkit-text-stroke:0.5px #000;letter-spacing:0.6px">01/31/2003 11:02 a</div>
<div class="t" style="left:142px;width:61px;text-align:right;top:189px;font-size:12px;-webkit-text-stroke:0.5px #000;letter-spacing:0.6px">83.0</div>
<div class="t" style="left:205px;width:48px;text-align:right;top:189px;font-size:12px;-webkit-text-stroke:0.5px #000;letter-spacing:0.6px">0.84</div>
<div class="t" style="left:255px;width:46px;text-align:right;top:189px;font-size:12px;-webkit-text-stroke:0.5px #000;letter-spacing:0.6px">225</div>
<div class="t" style="left:303px;width:50px;text-align:right;top:189px;font-size:12px;-webkit-text-stroke:0.5px #000;letter-spacing:0.6px">0</div>
<div class="t" style="left:368px;top:189px;font-size:12px;-webkit-text-stroke:0.5px #000;letter-spacing:0.6px">01/31/2003 10:56 a</div>
<div class="a" style="left:711px;top:195px;width:31px;height:1px;background:repeating-linear-gradient(90deg,#000 0 3px,transparent 3px 4px)"></div>
<div class="t" style="left:1px;width:10px;text-align:center;top:205px;font-size:12px;font-weight:bold">+</div>
<div class="t" style="left:25px;top:205px;font-size:12px;-webkit-text-stroke:0.5px #000;letter-spacing:0.6px">02/05/2003 12:00 p</div>
<div class="t" style="left:142px;width:61px;text-align:right;top:205px;font-size:12px;-webkit-text-stroke:0.5px #000;letter-spacing:0.6px">77.2</div>
<div class="t" style="left:205px;width:48px;text-align:right;top:205px;font-size:12px;-webkit-text-stroke:0.5px #000;letter-spacing:0.6px">0.24</div>
<div class="t" style="left:255px;width:46px;text-align:right;top:205px;font-size:12px;-webkit-text-stroke:0.5px #000;letter-spacing:0.6px">225</div>
<div class="t" style="left:303px;width:50px;text-align:right;top:205px;font-size:12px;-webkit-text-stroke:0.5px #000;letter-spacing:0.6px">0</div>
<div class="t" style="left:368px;top:205px;font-size:12px;-webkit-text-stroke:0.5px #000;letter-spacing:0.6px">01/31/2003 10:56 a</div>
<div class="a" style="left:711px;top:211px;width:31px;height:1px;background:repeating-linear-gradient(90deg,#000 0 3px,transparent 3px 4px)"></div>
<div class="t" style="left:1px;width:10px;text-align:center;top:221px;font-size:12px;font-weight:bold">+</div>
<div class="t" style="left:25px;top:221px;font-size:12px;-webkit-text-stroke:0.5px #000;letter-spacing:0.6px">02/12/2003 09:15 a</div>
<div class="t" style="left:142px;width:61px;text-align:right;top:221px;font-size:12px;-webkit-text-stroke:0.5px #000;letter-spacing:0.6px">58.2</div>
<div class="t" style="left:205px;width:48px;text-align:right;top:221px;font-size:12px;-webkit-text-stroke:0.5px #000;letter-spacing:0.6px">-1.77</div>
<div class="t" style="left:255px;width:46px;text-align:right;top:221px;font-size:12px;-webkit-text-stroke:0.5px #000;letter-spacing:0.6px">225</div>
<div class="t" style="left:303px;width:50px;text-align:right;top:221px;font-size:12px;-webkit-text-stroke:0.5px #000;letter-spacing:0.6px">0</div>
<div class="t" style="left:368px;top:221px;font-size:12px;-webkit-text-stroke:0.5px #000;letter-spacing:0.6px">01/31/2003 10:56 a</div>
<div class="a" style="left:711px;top:227px;width:31px;height:1px;background:repeating-linear-gradient(90deg,#000 0 3px,transparent 3px 4px)"></div>
<div class="t" style="left:1px;width:10px;text-align:center;top:237px;font-size:12px;font-weight:bold">+</div>
<div class="t" style="left:25px;top:237px;font-size:12px;-webkit-text-stroke:0.5px #000;letter-spacing:0.6px">02/12/2003 11:47 a</div>
<div class="t" style="left:142px;width:61px;text-align:right;top:237px;font-size:12px;-webkit-text-stroke:0.5px #000;letter-spacing:0.6px">85.0</div>
<div class="t" style="left:205px;width:48px;text-align:right;top:237px;font-size:12px;-webkit-text-stroke:0.5px #000;letter-spacing:0.6px">1.05</div>
<div class="t" style="left:255px;width:46px;text-align:right;top:237px;font-size:12px;-webkit-text-stroke:0.5px #000;letter-spacing:0.6px">225</div>
<div class="t" style="left:303px;width:50px;text-align:right;top:237px;font-size:12px;-webkit-text-stroke:0.5px #000;letter-spacing:0.6px">0</div>
<div class="t" style="left:368px;top:237px;font-size:12px;-webkit-text-stroke:0.5px #000;letter-spacing:0.6px">01/31/2003 10:56 a</div>
<div class="a" style="left:711px;top:243px;width:31px;height:1px;background:repeating-linear-gradient(90deg,#000 0 3px,transparent 3px 4px)"></div>
<div class="t" style="left:25px;top:253px;font-size:12px;-webkit-text-stroke:0.5px #000;letter-spacing:0.6px">02/17/2003 09:15 a</div>
<div class="t" style="left:142px;width:61px;text-align:right;top:253px;font-size:12px;-webkit-text-stroke:0.5px #000;letter-spacing:0.6px">94.2</div>
<div class="t" style="left:205px;width:48px;text-align:right;top:253px;font-size:12px;-webkit-text-stroke:0.5px #000;letter-spacing:0.6px">2.02</div>
<div class="t" style="left:255px;width:46px;text-align:right;top:253px;font-size:12px;-webkit-text-stroke:0.5px #000;letter-spacing:0.6px">225</div>
<div class="t" style="left:303px;width:50px;text-align:right;top:253px;font-size:12px;-webkit-text-stroke:0.5px #000;letter-spacing:0.6px">0</div>
<div class="t" style="left:368px;top:253px;font-size:12px;-webkit-text-stroke:0.5px #000;letter-spacing:0.6px">02/17/2003 09:12 a</div>
<div class="a" style="left:711px;top:259px;width:31px;height:1px;background:repeating-linear-gradient(90deg,#000 0 3px,transparent 3px 4px)"></div>
<div class="a" style="left:743px;top:0;width:16px;height:257px;background-color:#fff;background-image:linear-gradient(45deg,#D4D0C8 25%,transparent 25%,transparent 75%,#D4D0C8 75%),linear-gradient(45deg,#D4D0C8 25%,transparent 25%,transparent 75%,#D4D0C8 75%);background-size:2px 2px;background-position:0 0,1px 1px"></div>
<div class="ddb" style="left:743px;top:0px;width:16px;height:16px"><div></div></div>
<svg class="a" style="left:747px;top:7px" width="7" height="4" shape-rendering="crispEdges"><rect x="3" y="0" width="1" height="1" fill="#000"/><rect x="2" y="1" width="3" height="1" fill="#000"/><rect x="1" y="2" width="5" height="1" fill="#000"/><rect x="0" y="3" width="7" height="1" fill="#000"/></svg>
<div class="ddb" style="left:743px;top:16px;width:16px;height:16px"><div></div></div>
<div class="ddb" style="left:743px;top:241px;width:16px;height:16px"><div></div></div>
<svg class="a" style="left:747px;top:247px" width="7" height="4" shape-rendering="crispEdges"><rect x="0" y="0" width="7" height="1" fill="#000"/><rect x="1" y="1" width="5" height="1" fill="#000"/><rect x="2" y="2" width="3" height="1" fill="#000"/><rect x="3" y="3" width="1" height="1" fill="#000"/></svg>
</div>
<svg class="a" style="left:0;top:0" width="160" height="70" shape-rendering="crispEdges"><rect x="22" y="47" width="5" height="1" fill="#000"/><rect x="18" y="48" width="5" height="1" fill="#000"/><rect x="23" y="48" width="3" height="1" fill="#fff"/><rect x="26" y="48" width="4" height="1" fill="#000"/><rect x="17" y="49" width="14" height="1" fill="#000"/><rect x="17" y="50" width="1" height="1" fill="#000"/><rect x="18" y="50" width="3" height="1" fill="#fff"/><rect x="21" y="50" width="6" height="1" fill="#000"/><rect x="27" y="50" width="3" height="1" fill="#fff"/><rect x="30" y="50" width="1" height="1" fill="#000"/><rect x="17" y="51" width="1" height="1" fill="#000"/><rect x="18" y="51" width="2" height="1" fill="#fff"/><rect x="20" y="51" width="2" height="1" fill="#000"/><rect x="22" y="51" width="4" height="1" fill="#A08888"/><rect x="26" y="51" width="2" height="1" fill="#000"/><rect x="28" y="51" width="2" height="1" fill="#fff"/><rect x="30" y="51" width="1" height="1" fill="#000"/><rect x="17" y="52" width="1" height="1" fill="#000"/><rect x="18" y="52" width="2" height="1" fill="#fff"/><rect x="20" y="52" width="1" height="1" fill="#000"/><rect x="21" y="52" width="1" height="1" fill="#A08888"/><rect x="22" y="52" width="2" height="1" fill="#00FFFF"/><rect x="24" y="52" width="2" height="1" fill="#A08888"/><rect x="26" y="52" width="1" height="1" fill="#008888"/><rect x="27" y="52" width="1" height="1" fill="#000"/><rect x="28" y="52" width="2" height="1" fill="#fff"/><rect x="30" y="52" width="1" height="1" fill="#000"/><rect x="17" y="53" width="1" height="1" fill="#000"/><rect x="18" y="53" width="2" height="1" fill="#A0A0A0"/><rect x="20" y="53" width="1" height="1" fill="#000"/><rect x="21" y="53" width="1" height="1" fill="#A08888"/><rect x="22" y="53" width="1" height="1" fill="#00FFFF"/><rect x="23" y="53" width="2" height="1" fill="#A08888"/><rect x="25" y="53" width="2" height="1" fill="#008888"/><rect x="27" y="53" width="1" height="1" fill="#000"/><rect x="28" y="53" width="2" height="1" fill="#A0A0A0"/><rect x="30" y="53" width="1" height="1" fill="#000"/><rect x="17" y="54" width="1" height="1" fill="#000"/><rect x="18" y="54" width="2" height="1" fill="#A0A0A0"/><rect x="20" y="54" width="1" height="1" fill="#000"/><rect x="21" y="54" width="2" height="1" fill="#A08888"/><rect x="23" y="54" width="4" height="1" fill="#008888"/><rect x="27" y="54" width="1" height="1" fill="#000"/><rect x="28" y="54" width="2" height="1" fill="#A0A0A0"/><rect x="30" y="54" width="1" height="1" fill="#000"/><rect x="17" y="55" width="1" height="1" fill="#000"/><rect x="18" y="55" width="2" height="1" fill="#A0A0A0"/><rect x="20" y="55" width="2" height="1" fill="#000"/><rect x="22" y="55" width="1" height="1" fill="#A08888"/><rect x="23" y="55" width="3" height="1" fill="#008888"/><rect x="26" y="55" width="2" height="1" fill="#000"/><rect x="28" y="55" width="2" height="1" fill="#A0A0A0"/><rect x="30" y="55" width="1" height="1" fill="#000"/><rect x="18" y="56" width="5" height="1" fill="#000"/><rect x="23" y="56" width="2" height="1" fill="#A08888"/><rect x="25" y="56" width="5" height="1" fill="#000"/><rect x="22" y="57" width="5" height="1" fill="#000"/><rect x="44" y="46" width="1" height="1" fill="#000"/><rect x="48" y="46" width="1" height="1" fill="#000"/><rect x="44" y="47" width="1" height="1" fill="#000"/><rect x="48" y="47" width="1" height="1" fill="#000"/><rect x="44" y="48" width="1" height="1" fill="#000"/><rect x="48" y="48" width="1" height="1" fill="#000"/><rect x="44" y="49" width="1" height="1" fill="#000"/><rect x="48" y="49" width="1" height="1" fill="#000"/><rect x="45" y="50" width="1" height="1" fill="#000"/><rect x="47" y="50" width="1" height="1" fill="#000"/><rect x="45" y="51" width="1" height="1" fill="#000"/><rect x="47" y="51" width="1" height="1" fill="#000"/><rect x="46" y="52" width="1" height="1" fill="#000"/><rect x="45" y="53" width="1" height="1" fill="#000080"/><rect x="47" y="53" width="1" height="1" fill="#000080"/><rect x="45" y="54" width="1" height="1" fill="#000080"/><rect x="47" y="54" width="1" height="1" fill="#000080"/><rect x="43" y="55" width="3" height="1" fill="#000080"/><rect x="47" y="55" width="3" height="1" fill="#000080"/><rect x="42" y="56" width="1" height="1" fill="#000080"/><rect x="45" y="56" width="1" height="1" fill="#000080"/><rect x="47" y="56" width="1" height="1" fill="#000080"/><rect x="50" y="56" width="1" height="1" fill="#000080"/><rect x="42" y="57" width="1" height="1" fill="#000080"/><rect x="45" y="57" width="1" height="1" fill="#000080"/><rect x="47" y="57" width="1" height="1" fill="#000080"/><rect x="50" y="57" width="1" height="1" fill="#000080"/><rect x="42" y="58" width="1" height="1" fill="#000080"/><rect x="45" y="58" width="1" height="1" fill="#000080"/><rect x="47" y="58" width="1" height="1" fill="#000080"/><rect x="50" y="58" width="1" height="1" fill="#000080"/><rect x="43" y="59" width="2" height="1" fill="#000080"/><rect x="48" y="59" width="2" height="1" fill="#000080"/><rect x="136" y="45" width="9" height="1" fill="#000"/><rect x="135" y="46" width="1" height="1" fill="#000"/><rect x="136" y="46" width="8" height="1" fill="#fff"/><rect x="144" y="46" width="1" height="1" fill="#000"/><rect x="135" y="47" width="1" height="1" fill="#000"/><rect x="136" y="47" width="1" height="1" fill="#fff"/><rect x="137" y="47" width="5" height="1" fill="#000"/><rect x="142" y="47" width="1" height="1" fill="#fff"/><rect x="143" y="47" width="1" height="1" fill="#000"/><rect x="144" y="47" width="1" height="1" fill="#fff"/><rect x="134" y="48" width="1" height="1" fill="#000"/><rect x="135" y="48" width="8" height="1" fill="#fff"/><rect x="143" y="48" width="1" height="1" fill="#000"/><rect x="134" y="49" width="1" height="1" fill="#000"/><rect x="135" y="49" width="1" height="1" fill="#fff"/><rect x="136" y="49" width="5" height="1" fill="#000"/><rect x="141" y="49" width="1" height="1" fill="#fff"/><rect x="142" y="49" width="1" height="1" fill="#000"/><rect x="144" y="49" width="1" height="1" fill="#fff"/><rect x="133" y="50" width="1" height="1" fill="#000"/><rect x="134" y="50" width="8" height="1" fill="#fff"/><rect x="142" y="50" width="1" height="1" fill="#000"/><rect x="143" y="50" width="1" height="1" fill="#fff"/><rect x="132" y="51" width="12" height="1" fill="#000"/><rect x="144" y="51" width="1" height="1" fill="#fff"/><rect x="131" y="52" width="1" height="1" fill="#000"/><rect x="132" y="52" width="10" height="1" fill="#E8E4DC"/><rect x="142" y="52" width="2" height="1" fill="#000"/><rect x="131" y="53" width="13" height="1" fill="#000"/><rect x="144" y="53" width="1" height="1" fill="#fff"/><rect x="131" y="54" width="1" height="1" fill="#000"/><rect x="132" y="54" width="6" height="1" fill="#E8E4DC"/><rect x="138" y="54" width="3" height="1" fill="#FFFF00"/><rect x="141" y="54" width="2" height="1" fill="#E8E4DC"/><rect x="143" y="54" width="2" height="1" fill="#000"/><rect x="131" y="55" width="1" height="1" fill="#000"/><rect x="132" y="55" width="6" height="1" fill="#E8E4DC"/><rect x="138" y="55" width="3" height="1" fill="#FFFF00"/><rect x="141" y="55" width="2" height="1" fill="#E8E4DC"/><rect x="143" y="55" width="1" height="1" fill="#000"/><rect x="144" y="55" width="1" height="1" fill="#fff"/><rect x="131" y="56" width="14" height="1" fill="#000"/><rect x="132" y="57" width="1" height="1" fill="#000"/><rect x="133" y="57" width="10" height="1" fill="#E8E4DC"/><rect x="143" y="57" width="1" height="1" fill="#000"/><rect x="144" y="57" width="1" height="1" fill="#fff"/><rect x="132" y="58" width="12" height="1" fill="#000"/><circle cx="69" cy="51" r="5.5" stroke="#000" stroke-width="1" fill="none" shape-rendering="auto"/><path d="M70 46.5 A4.5 4.5 0 0 1 73.5 50" stroke="#fff" stroke-width="1" fill="none" shape-rendering="auto"/><path d="M72.3 55.3 L76.5 59.5" stroke="#000080" stroke-width="2.6" stroke-linecap="butt" shape-rendering="auto"/><path d="M72.6 56.6 L74.6 58.6" stroke="#8080C0" stroke-width="0.6" shape-rendering="auto"/><rect x="85" y="45" width="1" height="14" fill="#000"/>
<rect x="85" y="58" width="15" height="1" fill="#000"/>
<rect x="86" y="46" width="14" height="1" fill="#808080"/>
<rect x="86" y="50" width="14" height="1" fill="#808080"/>
<rect x="86" y="54" width="14" height="1" fill="#808080"/>
<rect x="86" y="47" width="1" height="1" fill="#000"/>
<rect x="86" y="51" width="1" height="1" fill="#000"/>
<rect x="86" y="55" width="1" height="1" fill="#000"/>
<rect x="89" y="57" width="1" height="1" fill="#000"/>
<rect x="94" y="57" width="1" height="1" fill="#000"/>
<rect x="108" y="45" width="1" height="14" fill="#000"/>
<rect x="108" y="58" width="16" height="1" fill="#000"/>
<rect x="113" y="45" width="1" height="13" fill="#808080"/>
<rect x="118" y="45" width="1" height="13" fill="#808080"/>
<rect x="123" y="45" width="1" height="13" fill="#808080"/>
<rect x="109" y="47" width="1" height="1" fill="#000"/>
<rect x="109" y="51" width="1" height="1" fill="#000"/>
<rect x="109" y="55" width="1" height="1" fill="#000"/></svg></body></html>
